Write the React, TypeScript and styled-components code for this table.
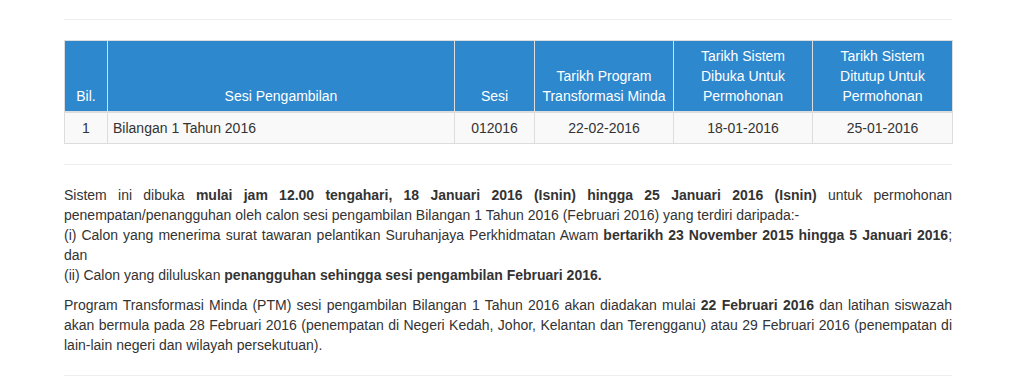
import * as React from 'react'
import styled, { createGlobalStyle } from 'styled-components'

const GlobalStyle = createGlobalStyle`
  html, body {
    margin: 0;
    padding: 0;
    background: #fff;
  }
  body {
    font-family: 'Liberation Sans', Arial, Helvetica, sans-serif;
    font-size: 14px;
    line-height: 20px;
    color: #333;
  }
`

const Page = styled.main`
  width: 888px;
  margin-left: 64px;
  padding-top: 1px;
`

const Rule = styled.hr`
  border: 0;
  border-top: 1px solid #eee;
  margin: 20px 0;
  height: 0;

  &:first-child {
    margin-top: 18px;
  }
`

const Table = styled.table`
  width: 100%;
  border-collapse: collapse;
  border-spacing: 0;
  table-layout: fixed;
  margin-bottom: 20px;
  border: 1px solid #ddd;
`

const HeadCell = styled.th`
  background: #2e88cd;
  color: #fff;
  font-weight: normal;
  text-align: center;
  vertical-align: bottom;
  padding: 5px;
  line-height: 20px;
  border: 1px solid #ddd;
  border-bottom: 2px solid #ddd;
`

const Row = styled.tr`
  background: #f9f9f9;
`

const Cell = styled.td<{ $align?: 'left' | 'center' }>`
  text-align: ${(p) => p.$align ?? 'center'};
  padding: 5px;
  line-height: 20px;
  border: 1px solid #ddd;
  vertical-align: top;
`

const Para = styled.p`
  margin: 0 0 10px;
  text-align: justify;
`

const Strong = styled.b`
  font-weight: bold;
`

type Session = {
  bil: number
  name: string
  code: string
  ptm: string
  open: string
  close: string
}

const sessions: Session[] = [
  {
    bil: 1,
    name: 'Bilangan 1 Tahun 2016',
    code: '012016',
    ptm: '22-02-2016',
    open: '18-01-2016',
    close: '25-01-2016',
  },
]

const columns = [43, 347, 80, 139, 139, 140]

export default function App() {
  return (
    <>
      <GlobalStyle />
      <Page>
        <Rule />
        <Table>
          <colgroup>
            {columns.map((w, i) => (
              <col key={i} style={{ width: w }} />
            ))}
          </colgroup>
          <thead>
            <tr>
              <HeadCell>Bil.</HeadCell>
              <HeadCell>Sesi Pengambilan</HeadCell>
              <HeadCell>Sesi</HeadCell>
              <HeadCell>Tarikh Program Transformasi Minda</HeadCell>
              <HeadCell>Tarikh Sistem Dibuka Untuk Permohonan</HeadCell>
              <HeadCell>Tarikh Sistem Ditutup Untuk Permohonan</HeadCell>
            </tr>
          </thead>
          <tbody>
            {sessions.map((s) => (
              <Row key={s.bil}>
                <Cell>{s.bil}</Cell>
                <Cell $align='left'>{s.name}</Cell>
                <Cell>{s.code}</Cell>
                <Cell>{s.ptm}</Cell>
                <Cell>{s.open}</Cell>
                <Cell>{s.close}</Cell>
              </Row>
            ))}
          </tbody>
        </Table>
        <Rule />
        <Para>
          Sistem ini dibuka{' '}
          <Strong>
            mulai jam 12.00 tengahari, 18 Januari 2016 (Isnin) hingga 25 Januari
            2016 (Isnin)
          </Strong>{' '}
          untuk permohonan penempatan/penangguhan oleh calon sesi pengambilan
          Bilangan 1 Tahun 2016 (Februari 2016) yang terdiri daripada:-
          <br />
          (i) Calon yang menerima surat tawaran pelantikan Suruhanjaya
          Perkhidmatan Awam{' '}
          <Strong>bertarikh 23 November 2015 hingga 5 Januari 2016</Strong>; dan
          <br />
          (ii) Calon yang diluluskan{' '}
          <Strong>penangguhan sehingga sesi pengambilan Februari 2016.</Strong>
        </Para>
        <Para>
          Program Transformasi Minda (PTM) sesi pengambilan Bilangan 1 Tahun 2016
          akan diadakan mulai <Strong>22 Februari 2016</Strong> dan latihan
          siswazah akan bermula pada 28 Februari 2016 (penempatan di Negeri Kedah,
          Johor, Kelantan dan Terengganu) atau 29 Februari 2016 (penempatan di
          lain-lain negeri dan wilayah persekutuan).
        </Para>
        <Rule />
      </Page>
    </>
  )
}
